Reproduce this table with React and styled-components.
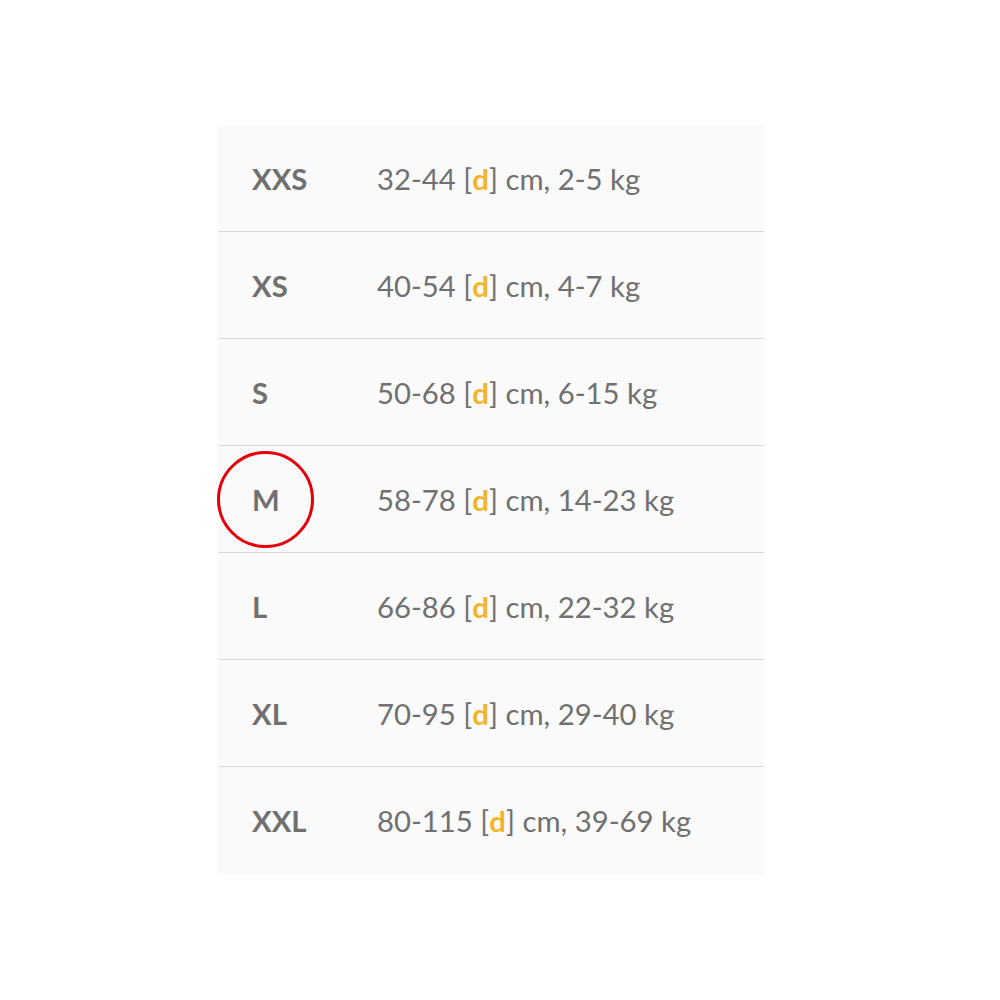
import React from "react";
import styled, { createGlobalStyle } from "styled-components";

const Global = createGlobalStyle`
  html, body { margin: 0; padding: 0; background: #ffffff; }
  body { font-family: Lato, "Open Sans", sans-serif; }
`;

const Page = styled.div`
  width: 1000px;
  height: 1000px;
  display: flex;
  justify-content: center;
  align-items: flex-start;
  padding-top: 125px;
  box-sizing: border-box;
  padding-right: 18px;
`;

const Table = styled.div`
  position: relative;
  width: 546px;
  background: #fafafa;
  display: flex;
  flex-direction: column;
  padding-bottom: 2px;
`;

const Row = styled.div`
  display: grid;
  grid-template-columns: 125px 1fr;
  align-items: center;
  height: 106px;
  padding-left: 34px;
  border-top: ${(p) => (p.$first ? "none" : "1px solid #d9d9d9")};
  box-sizing: content-box;
`;

const Size = styled.div`
  font-weight: 700;
  font-size: 29.3px;
  color: #707070;
`;

const Value = styled.div`
  font-weight: 400;
  font-size: 29.3px;
  color: #707070;
`;

const D = styled.span`
  color: #f4b42a;
  font-weight: 700;
`;

const Circle = styled.div`
  position: absolute;
  left: -1px;
  top: 326px;
  width: 97px;
  height: 97px;
  border: 3.5px solid #e4000b;
  border-radius: 50%;
  box-sizing: border-box;
`;

const rows = [
  ["XXS", "32-44", "2-5"],
  ["XS", "40-54", "4-7"],
  ["S", "50-68", "6-15"],
  ["M", "58-78", "14-23"],
  ["L", "66-86", "22-32"],
  ["XL", "70-95", "29-40"],
  ["XXL", "80-115", "39-69"],
];

export default function App() {
  return (
    <>
      <Global />
      <Page>
        <Table>
          {rows.map(([s, cm, kg], i) => (
            <Row key={s} $first={i === 0}>
              <Size>{s}</Size>
              <Value>
                {cm} [<D>d</D>] cm, {kg} kg
              </Value>
            </Row>
          ))}
          <Circle />
        </Table>
      </Page>
    </>
  );
}
